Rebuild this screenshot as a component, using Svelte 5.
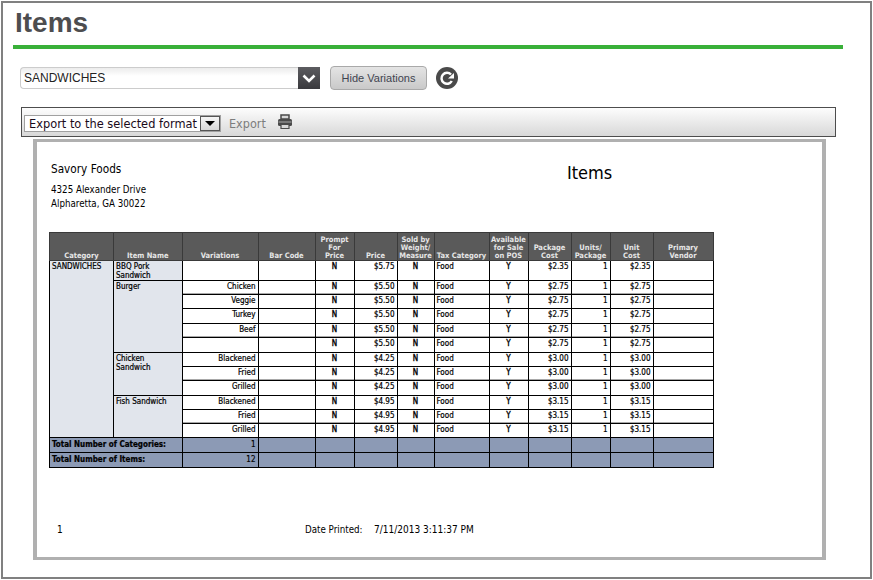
<script>
  const cols = [64, 68.5, 76, 57, 39, 43, 37, 55, 39, 43, 39, 43, 60];
  const headers = [
    ['Category'], ['Item Name'], ['Variations'], ['Bar Code'], ['Prompt', 'For', 'Price'], ['Price'],
    ['Sold by', 'Weight/', 'Measure'], ['Tax Category'], ['Available', 'for Sale', 'on POS'],
    ['Package', 'Cost'], ['Units/', 'Package'], ['Unit', 'Cost'], ['Primary', 'Vendor']
  ];
  const rows = [
    { item: ['BBQ Pork', 'Sandwich'], span: 1, v: '', p: '$5.75', pc: '$2.35', h: 19 },
    { item: ['Burger'], span: 5, v: 'Chicken', p: '$5.50', pc: '$2.75', h: 14, soft: true },
    { v: 'Veggie', p: '$5.50', pc: '$2.75', h: 14 },
    { v: 'Turkey', p: '$5.50', pc: '$2.75', h: 15 },
    { v: 'Beef', p: '$5.50', pc: '$2.75', h: 14, soft: true },
    { v: '', p: '$5.50', pc: '$2.75', h: 15 },
    { item: ['Chicken', 'Sandwich'], span: 3, v: 'Blackened', p: '$4.25', pc: '$3.00', h: 14 },
    { v: 'Fried', p: '$4.25', pc: '$3.00', h: 14, soft: true },
    { v: 'Grilled', p: '$4.25', pc: '$3.00', h: 15 },
    { item: ['Fish Sandwich'], span: 3, v: 'Blackened', p: '$4.95', pc: '$3.15', h: 14 },
    { v: 'Fried', p: '$4.95', pc: '$3.15', h: 14, soft: true },
    { v: 'Grilled', p: '$4.95', pc: '$3.15', h: 14 }
  ];
  const totals = [['Total Number of Categories:', '1'], ['Total Number of Items:', '12']];
</script>

<div class="frame">
  <h1 class="title">Items</h1>

  <div class="filters">
    <div class="combo">
      <span class="combo-text">SANDWICHES</span>
      <span class="combo-arrow">
        <svg width="14" height="9" viewBox="0 0 14 9"><path d="M1.500 1.500 7 7l5.500-5.500" fill="none" stroke="#fff" stroke-width="2.600"/></svg>
      </span>
    </div>
    <button class="hide-btn">Hide Variations</button>
    <svg class="refresh" width="22" height="22" viewBox="0 0 22 22">
      <circle cx="11" cy="11" r="11" fill="#4a4a4a"/>
      <path d="M15 7.500A5.500 5.500 0 1 0 15.800 14" fill="none" stroke="#fff" stroke-width="2.500"/>
      <path d="M18 6v5.500h-6z" fill="#fff"/>
    </svg>
  </div>

  <div class="toolbar">
    <div class="format">
      <span class="format-text">Export to the selected format</span>
      <span class="format-arrow"><i></i></span>
    </div>
    <span class="export">Export</span>
    <svg class="printer" width="16" height="16" viewBox="0 0 16 16">
      <path d="M4 1h8v4H4z" fill="#d8d8d8" stroke="#4a4a4a" stroke-width="1.500"/>
      <rect x="1" y="5" width="14" height="7" rx="1.500" fill="#4a4a4a"/>
      <rect x="1.500" y="7.500" width="13" height="1" fill="#aaa"/>
      <path d="M4 10.500h8v4H4z" fill="#d8d8d8" stroke="#4a4a4a" stroke-width="1.200"/>
    </svg>
  </div>

  <div class="report">
    <div class="report-head">
      <div class="company">
        <div class="name">Savory Foods</div>
        <div class="addr">4325 Alexander Drive</div>
        <div class="addr">Alpharetta, GA 30022</div>
      </div>
      <div class="report-title">Items</div>
    </div>

    <table>
      <colgroup>
        {#each cols as c}<col style="width:{c}px" />{/each}
      </colgroup>
      <thead>
        <tr>
          {#each headers as h}
            <th>{#each h as line}<div>{line}</div>{/each}</th>
          {/each}
        </tr>
      </thead>
      <tbody>
        {#each rows as r, i}
          <tr class:soft={r.soft} style="height:{r.h}px">
            {#if i === 0}<td class="group" rowspan={rows.length}>SANDWICHES</td>{/if}
            {#if r.item}<td class="group" rowspan={r.span}>{#each r.item as line}<div>{line}</div>{/each}</td>{/if}
            <td class="right">{r.v}</td>
            <td></td>
            <td class="center">N</td>
            <td class="right">{r.p}</td>
            <td class="center">N</td>
            <td>Food</td>
            <td class="center">Y</td>
            <td class="right">{r.pc}</td>
            <td class="right">1</td>
            <td class="right">{r.pc}</td>
            <td></td>
          </tr>
        {/each}
        {#each totals as t}
          <tr class="total">
            <td colspan="2">{t[0]}</td>
            <td class="right">{t[1]}</td>
            {#each Array(10) as _}<td></td>{/each}
          </tr>
        {/each}
      </tbody>
    </table>

    <div class="report-foot">
      <span class="page">1</span>
      <span class="printed">Date Printed:</span>
      <span>7/11/2013 3:11:37 PM</span>
    </div>
  </div>
</div>

<style>
  :global(body) { margin: 0; background: #fff; }
  .frame {
    box-sizing: border-box;
    width: 871px;
    height: 578px;
    margin: 1px;
    border: 2px solid #808080;
    padding: 0 0 0 10px;
    font-family: "DejaVu Sans Condensed", "DejaVu Sans", sans-serif;
    overflow: hidden;
  }
  .title {
    box-sizing: border-box;
    width: 830px;
    height: 46px;
    margin: 0;
    padding-left: 2px;
    border-bottom: 4px solid #39b039;
    font: bold 28px/39px "Liberation Sans", Arial, sans-serif;
    color: #4d4d4f;
  }
  .filters {
    display: flex;
    align-items: center;
    height: 24px;
    margin: 17px 0 0 7px;
  }
  .combo {
    box-sizing: border-box;
    width: 300px;
    height: 22px;
    display: flex;
    align-items: center;
    justify-content: space-between;
    border: 1px solid #ccc;
    border-right: 0;
    border-radius: 4px 0 0 4px;
    background: linear-gradient(#ececec, #fff 40%);
  }
  .combo-text {
    padding-left: 3px;
    font: 12px "Liberation Sans", Arial, sans-serif;
    color: #222;
  }
  .combo-arrow {
    width: 22px;
    height: 22px;
    margin: -1px 0;
    display: flex;
    align-items: center;
    justify-content: center;
    background: linear-gradient(#5c5c60, #3a3a3e);
  }
  .hide-btn {
    box-sizing: border-box;
    width: 97px;
    height: 24px;
    margin-left: 10px;
    padding: 0;
    border: 1px solid #a9a9a9;
    border-radius: 4px;
    background: linear-gradient(#e4e4e4, #c9c9c9);
    font: 11px "Liberation Sans", Arial, sans-serif;
    color: #3f4450;
  }
  .refresh { margin-left: 9px; }
  .toolbar {
    box-sizing: border-box;
    width: 815px;
    height: 30px;
    margin: 17px 0 0 8px;
    padding: 3px 0 0 2px;
    display: flex;
    align-items: center;
    border: 1px solid #4d4d4d;
    background: linear-gradient(#fdfdfd, #d8d8d8);
  }
  .format {
    box-sizing: border-box;
    width: 197px;
    height: 17px;
    display: flex;
    justify-content: space-between;
    background: #fff;
    border: 1px solid #a0a0a0;
  }
  .format-text {
    padding-left: 4px;
    font: 11.400px/16px "DejaVu Sans", Verdana, sans-serif;
    color: #1a0a1a;
    white-space: nowrap;
  }
  .format-arrow {
    width: 20px;
    box-sizing: border-box;
    display: flex;
    align-items: center;
    justify-content: center;
    background: linear-gradient(#f5f5f5, #d8d8d8);
    border: 1px solid #555;
  }
  .format-arrow i {
    width: 0;
    height: 0;
    border: 5px solid transparent;
    border-top: 5px solid #000;
    border-bottom: 0;
  }
  .export {
    margin-left: 8px;
    font: 12.500px "DejaVu Sans Condensed", "DejaVu Sans", sans-serif;
    color: #7d7d7d;
  }
  .printer { margin: -3px 0 0 11px; }
  .report {
    box-sizing: border-box;
    width: 793px;
    height: 421px;
    margin: 2px 0 0 20px;
    padding: 0 0 0 12px;
    border: 3px solid #b0b0b0;
    border-left-width: 4px;
    border-right-width: 4px;
    color: #000;
  }
  .report-head {
    display: flex;
    height: 90px;
  }
  .company { width: 516px; padding: 19px 0 0 2px; }
  .name { font-size: 11.700px; line-height: 16px; margin-bottom: 6px; }
  .addr { font-size: 9.700px; line-height: 14px; }
  .report-title { font-size: 18px; line-height: 22px; padding-top: 20px; }
  table {
    table-layout: fixed;
    width: 664px;
    border-collapse: collapse;
    font-size: 8px;
    line-height: 10px;
  }
  th {
    height: 27px;
    padding: 0 1px;
    vertical-align: bottom;
    background: #5a5a5a;
    border: 1px solid #3a3a3a;
    color: #e6e6e6;
    font-weight: bold;
    text-align: center;
    line-height: 8px;
    font-size: 7.500px;
    white-space: nowrap;
  }
  td {
    padding: 1px 2px 0;
    vertical-align: top;
    border: 1px solid #000;
    white-space: nowrap;
    overflow: hidden;
    -webkit-text-stroke: 0.200px #000;
  }
  .group { background: #e1e5ec; line-height: 9px; }
  .soft td:not(.group) { box-shadow: inset 0 -1px 0 #a8a8a8; }
  .right { text-align: right; }
  .center { text-align: center; -webkit-text-stroke: 0.350px #000; }
  .total { height: 15px; }
  .total td {
    padding-top: 0;
    background: #8c9ab5;
    font-weight: bold;
    vertical-align: middle;
  }
  .total .right { font-weight: normal; }
  .report-foot {
    display: flex;
    margin-top: 55px;
    padding-left: 8px;
    font-size: 10px;
    line-height: 14px;
  }
  .page { width: 248px; }
  .printed { width: 69px; font-size: 9.700px; }
</style>
